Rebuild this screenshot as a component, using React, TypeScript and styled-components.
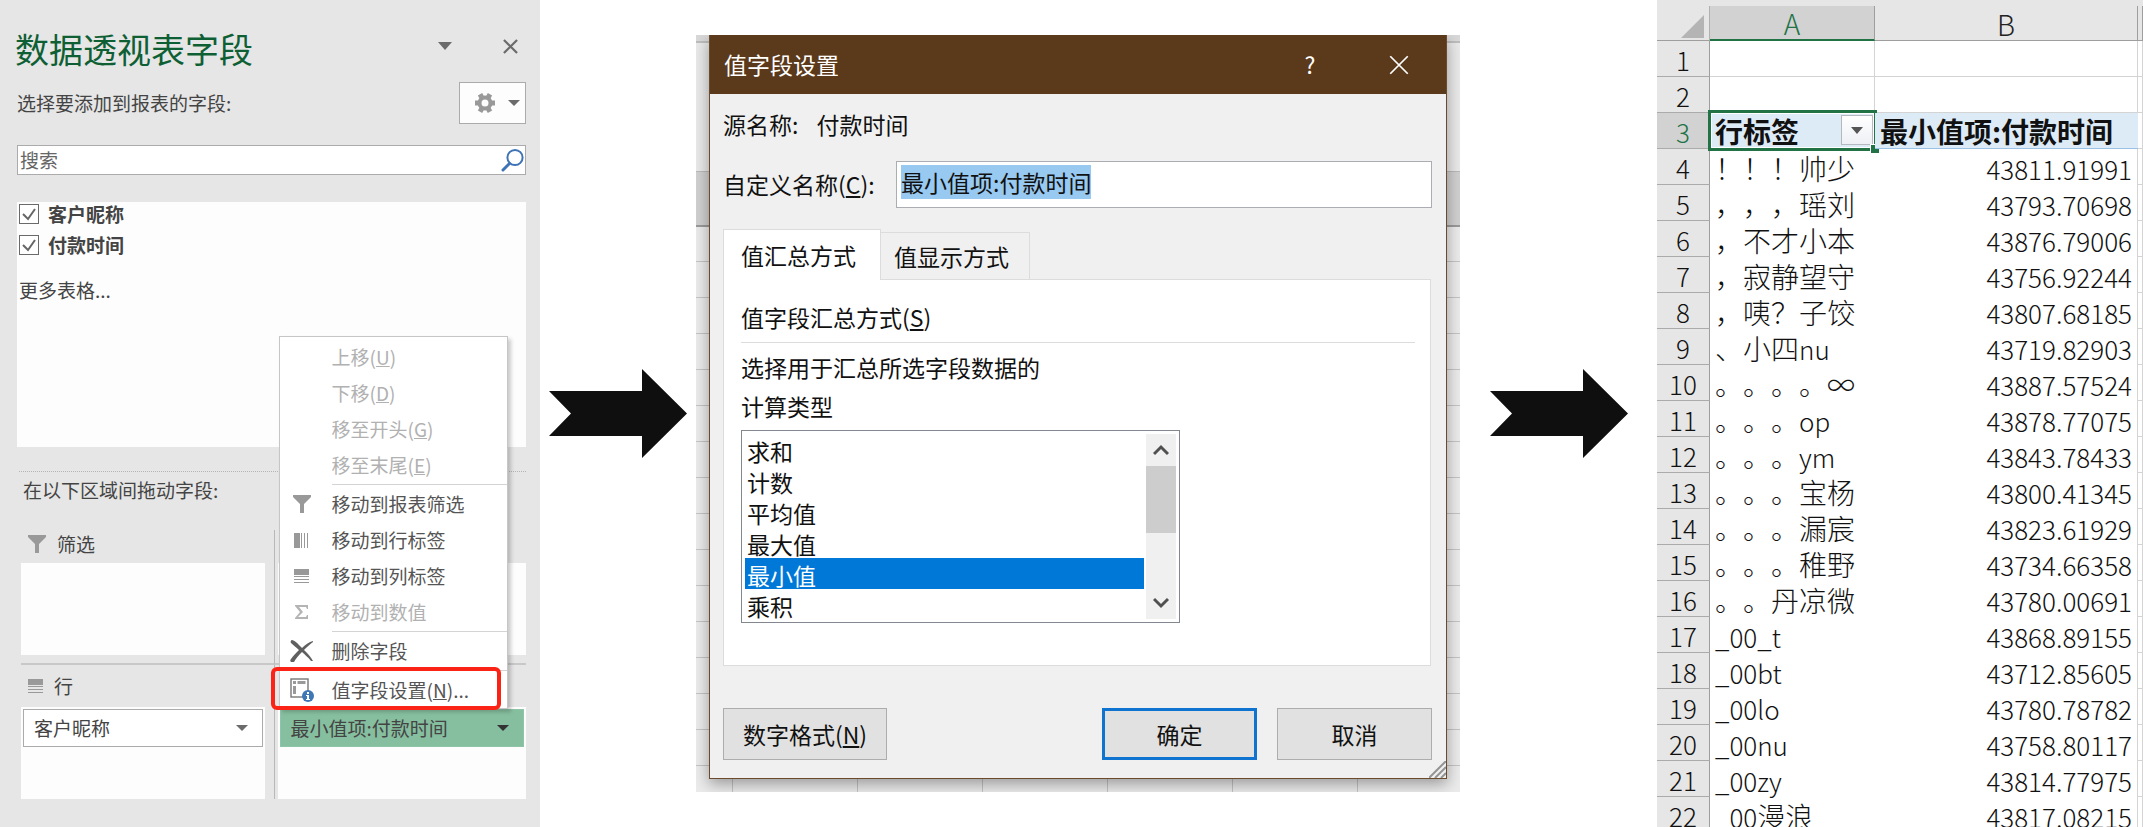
import { useEffect, useRef } from 'react';
import type { ReactNode } from 'react';
import styled, { createGlobalStyle, css } from 'styled-components';

const GlobalStyle = createGlobalStyle`
  *, *::before, *::after { box-sizing: border-box; }
  body {
    margin: 0;
    background: #fff;
    font-family: "Noto Sans CJK SC", "Noto Sans", sans-serif;
    text-spacing-trim: space-all;
  }
  button, input, select { font: inherit; color: inherit; margin: 0; }
  button { padding: 0; border: 0; background: none; cursor: default; }
  svg { display: block; }
`;

const Page = styled.main`
  display: grid;
  grid-template-columns: 540fr 156fr 764fr 197fr 486fr;
  height: 100vh;
  overflow: hidden;
`;

/* ---------- Field pane ---------- */

const Pane = styled.section`
  min-width: 0;
  padding: 27px 14px 28px 17px;
  background: #e6e6e6;
  color: #444;
  font-size: 19px;
  line-height: 24px;
`;

const PaneHeader = styled.header`
  display: flex;
  align-items: flex-start;
  gap: 33px;
  margin-left: -2px;
`;

const PaneTitle = styled.h1`
  flex: 1;
  margin: 0;
  color: #0f5f35;
  font-size: 34px;
  font-weight: 400;
  line-height: 44px;
`;

const IconButton = styled.button`
  display: grid;
  place-items: center;
  width: 32px;
  height: 38px;
`;

const ChooseRow = styled.div`
  display: flex;
  align-items: center;
  justify-content: space-between;
  margin-top: 11px;
`;

const GearButton = styled.button`
  display: flex;
  align-items: center;
  justify-content: flex-end;
  gap: 13px;
  width: 67px;
  height: 42px;
  padding-right: 5px;
  border: 1px solid #ababab;
  background: #fdfdfd;
`;

const SearchBox = styled.label`
  display: flex;
  align-items: center;
  height: 30px;
  margin-top: 21px;
  padding: 0 1px 0 2px;
  border: 1px solid #ababab;
  background: #fff;
`;

const SearchInput = styled.input`
  flex: 1;
  min-width: 0;
  height: 26px;
  padding: 0 0 2px;
  border: 0;
  outline: 0;
  background: none;
  &::placeholder { color: #666; opacity: 1; }
`;

const FieldList = styled.div`
  display: flex;
  flex-direction: column;
  align-items: flex-start;
  gap: 7px;
  height: 245px;
  margin-top: 27px;
  padding: 0 2px;
  background: #fdfdfd;
`;

const FieldLabel = styled.label`
  display: flex;
  align-items: center;
  gap: 9px;
  font-weight: 700;
`;

const CheckHolder = styled.span`
  display: grid;
  svg { grid-area: 1 / 1; pointer-events: none; }
`;

const Checkbox = styled.input`
  grid-area: 1 / 1;
  appearance: none;
  width: 20px;
  height: 20px;
  border: 1px solid #6a6a6a;
  background: #fff;
`;

const MoreLink = styled.a`
  margin-top: 14px;
  color: inherit;
  text-decoration: none;
`;

const DragHint = styled.p`
  margin: 24px 0 0 2px;
  padding: 6px 0 28px 4px;
  border-top: 1px dotted #b4b4b4;
`;

const ZoneGrid = styled.div`
  display: grid;
  grid-template-columns: 253fr 251fr;
  margin-left: 4px;
`;

const Zone = styled.div<{ $side: 'left' | 'right'; $last?: boolean }>`
  display: flex;
  flex-direction: column;
  min-width: 0;
  ${(p) =>
    p.$side === 'left'
      ? css`padding-right: 9px; border-right: 1px solid #b8b8b8;`
      : css`padding-left: 3px;`}
  ${(p) => !p.$last && css`padding-bottom: 8px; border-bottom: 2px solid #c8c8c8;`}
`;

const ZoneLabel = styled.div<{ $tall?: boolean }>`
  display: flex;
  align-items: center;
  gap: 11px;
  height: ${(p) => (p.$tall ? 42 : 33)}px;
  padding: ${(p) => (p.$tall ? '0 0 0 7px' : '0 0 6px 7px')};
`;

const ZoneBox = styled.div`
  height: 92px;
  padding: 2px;
  background: #fdfdfd;
`;

const ChipHolder = styled.div`
  position: relative;
`;

const Chip = styled.button<{ $active?: boolean }>`
  display: flex;
  align-items: center;
  justify-content: space-between;
  width: 100%;
  height: 38px;
  padding: 0 14px 0 10px;
  border: 1px solid ${(p) => (p.$active ? '#8fc5a7' : '#ababab')};
  background: ${(p) => (p.$active ? '#86bf9f' : '#fff')};
`;

const Menu = styled.div`
  position: absolute;
  z-index: 1;
  bottom: 100%;
  left: -1px;
  width: 229px;
  padding-top: 2px;
  border: 1px solid #c6c6c6;
  background: #fff;
  box-shadow: 3px 3px 4px rgba(0, 0, 0, 0.2);
`;

const MenuItem = styled.button`
  position: relative;
  display: grid;
  grid-template-columns: 24px 1fr;
  align-items: center;
  gap: 18px;
  width: 100%;
  height: 36px;
  padding-left: 10px;
  text-align: left;
  white-space: nowrap;
  color: #555;
  &:disabled { color: #b1b1b1; }
`;

const MenuIcon = styled.span`
  display: grid;
  place-items: center;
`;

const MenuRule = styled.hr`
  height: 1px;
  margin: 1px 0 1px 52px;
  border: 0;
  background: #d4d4d4;
`;

const Highlight = styled.span`
  position: absolute;
  top: -5px;
  right: 6px;
  bottom: -2px;
  left: -9px;
  border: 4px solid #fb2315;
  border-radius: 6px;
`;

/* ---------- Step arrow ---------- */

const ArrowCell = styled.div`
  display: grid;
  place-items: center;
`;

/* ---------- Dialog ---------- */

const Backdrop = styled.section`
  align-self: center;
  min-width: 0;
  padding: 0 13px 13px;
  overflow: hidden;
  background:
    linear-gradient(#d9d9d9 6px, #bdbdbd 6px 8px, #e9e9e9 8px 136px, #b9b9b9 136px 137px, #d0d0d0 137px 190px, #9a9a9a 190px 192px, transparent 192px),
    repeating-linear-gradient(90deg, transparent 0 36px, #c4c4c4 36px 37px, transparent 37px 125px) 0 100% / 100% 13px no-repeat,
    repeating-linear-gradient(transparent 0 35px, #c4c4c4 35px 36px) 0 191px no-repeat,
    #ebebeb;
`;

const Dialog = styled.div`
  position: relative;
  border: 1px solid #6b4a2e;
  border-top: 0;
  background: #f0f0f0;
  box-shadow: 0 5px 14px rgba(0, 0, 0, 0.35);
  color: #111;
  font-size: 23px;
  line-height: 31px;
`;

const TitleBar = styled.header`
  display: flex;
  align-items: center;
  height: 59px;
  padding: 0 19px 0 14px;
  background: #5b391b;
  color: #fff;
`;

const DialogTitle = styled.h2`
  flex: 1;
  margin: 0;
  font-size: 23px;
  font-weight: 400;
`;

const TitleButton = styled.button`
  display: grid;
  place-items: center;
  width: 56px;
  height: 40px;
  & + & { margin-left: 33px; }
`;

const DialogBody = styled.div`
  padding: 15px 14px 18px 13px;
`;

const SourceRow = styled.div`
  display: flex;
  gap: 18px;
`;

const NameRow = styled.div`
  display: grid;
  grid-template-columns: 173px 1fr;
  align-items: center;
  margin-top: 21px;
`;

const NameInput = styled.input`
  width: 100%;
  height: 47px;
  padding: 4px 4px 10px;
  border: 1px solid #abadb3;
  outline: 0;
  border-radius: 0;
  background: #fff;
  line-height: 31px;
  &::selection {
    background: rgba(151, 200, 240, 0.99);
    color: #111;
  }
`;

const TabRow = styled.div`
  display: flex;
  align-items: flex-end;
  height: 50px;
  margin-top: 21px;
`;

const Tab = styled.button<{ $active?: boolean }>`
  position: relative;
  margin-bottom: -1px;
  border: 1px solid #dcdcdc;
  text-align: left;
  ${(p) =>
    p.$active
      ? css`
          width: 158px;
          height: 51px;
          padding: 0 0 0 17px;
          border-bottom: 0;
          background: #fff;
        `
      : css`
          width: 150px;
          height: 48px;
          margin-left: -1px;
          padding: 1px 0 0 13px;
          background: #f0f0f0;
        `}
`;

const TabPanel = styled.div`
  height: 387px;
  margin-right: 1px;
  padding: 22px 15px 0 17px;
  border: 1px solid #dcdcdc;
  background: #fff;
`;

const SectionTitle = styled.h3`
  margin: 0;
  padding-bottom: 9px;
  border-bottom: 1px solid #dcdcdc;
  font-size: 23px;
  font-weight: 400;
`;

const Hint = styled.p`
  margin: 9px 0 8px;
`;

const ListLabel = styled.label`
  display: block;
  margin-bottom: 8px;
`;

const ListBox = styled.div`
  display: flex;
  width: 439px;
  height: 193px;
  padding: 3px;
  border: 1px solid #828790;
`;

const List = styled.select`
  flex: 1;
  height: 186px;
  padding: 0;
  border: 0;
  outline: 0;
  border-radius: 0;
  background: #fff;
  overflow: hidden;
  scrollbar-width: none;
  option {
    height: 31px;
    min-height: 31px;
    padding: 0 2px;
    line-height: 27px;
  }
  option:checked {
    background: linear-gradient(#0078d7, #0078d7);
    color: #fff;
    -webkit-text-fill-color: #fff;
  }
`;

const ScrollTrack = styled.div`
  display: flex;
  flex-direction: column;
  width: 30px;
  margin-left: 2px;
  background: #f0f0f0;
`;

const ScrollButton = styled.button`
  display: grid;
  place-items: center;
  height: 32px;
`;

const ScrollThumb = styled.div`
  height: 67px;
  margin-bottom: auto;
  background: #cdcdcd;
`;

const ButtonRow = styled.footer`
  display: flex;
  gap: 20px;
  margin-top: 42px;
`;

const DialogButton = styled.button<{ $primary?: boolean; $leading?: boolean }>`
  width: ${(p) => (p.$leading ? 164 : 155)}px;
  height: 52px;
  margin-right: ${(p) => (p.$leading ? 'auto' : '0')};
  border: ${(p) => (p.$primary ? '3px solid #0f73d0' : '1px solid #adadad')};
  background: #e1e1e1;
`;

const Grip = styled.svg`
  position: absolute;
  right: 0;
  bottom: 0;
`;

/* ---------- Worksheet ---------- */

const Sheet = styled.section`
  min-width: 0;
  padding-top: 6px;
  overflow: hidden;
  background: #e6e6e6;
`;

const Grid = styled.table`
  width: 100%;
  table-layout: fixed;
  border-collapse: separate;
  border-spacing: 0;
  background: #fff;
  color: #111;
  font-size: 26px;
  font-weight: 300;
  line-height: 33px;
  th, td { padding: 2px 0 0; white-space: nowrap; }
`;

const Corner = styled.td`
  height: 35px;
  padding: 7px 5px 0 0 !important;
  border-right: 1px solid #b0b0b0;
  border-bottom: 1px solid #9e9e9e;
  background: #e6e6e6;
  svg { margin-left: auto; }
`;

const ColumnHead = styled.th<{ $active?: boolean }>`
  height: 35px;
  border-right: 1px solid #9e9e9e;
  border-bottom: ${(p) => (p.$active ? '2px solid #217346' : '1px solid #9e9e9e')};
  background: ${(p) => (p.$active ? '#d2d2d2' : '#e6e6e6')};
  color: ${(p) => (p.$active ? '#217346' : '#222')};
  font-weight: 300;
  font-size: 28px;
  line-height: 31px;
`;

const RowHead = styled.th<{ $active?: boolean }>`
  height: 36px;
  border-right: 1px solid #9e9e9e;
  border-bottom: 1px solid #ababab;
  background: ${(p) => (p.$active ? '#d2d2d2' : '#e6e6e6')};
  color: ${(p) => (p.$active ? '#217346' : '#111')};
  font-weight: 300;
`;

const EmptyCell = styled.td`
  border-right: 1px solid #d4d4d4;
  border-bottom: 1px solid #d4d4d4;
`;

const NameCell = styled.td`
  padding-left: 5px !important;
  font-size: 28px;
`;

const Latin = styled.span`
  font-size: 26px;
`;

const ValueCell = styled.td`
  padding-right: 5px !important;
  border-right: 1px solid #d4d4d4;
  text-align: right;
`;

const PivotHead = styled.td`
  position: relative;
  padding-left: 5px !important;
  border-bottom: 1px solid #9bc2e6;
  background: #ddebf7;
  font-size: 28px;
  font-weight: 700;
`;

const Selection = styled.span`
  position: absolute;
  inset: -3px -2px -3px -2px;
  border: 3px solid #217346;
  box-shadow: inset 0 0 0 1px #fff;
  pointer-events: none;
  &::after {
    content: '';
    position: absolute;
    right: -5px;
    bottom: -5px;
    width: 9px;
    height: 9px;
    border: 1px solid #fff;
    border-right: 0;
    border-bottom: 0;
    background: #217346;
  }
`;

const FilterButton = styled.button`
  position: absolute;
  top: 2px;
  right: 2px;
  display: grid;
  place-items: center;
  width: 32px;
  height: 30px;
  border: 1px solid #b5b8bd;
  background: linear-gradient(#fff, #eef0f5);
`;

/* ---------- Icons ---------- */

const Caret = ({ w = 12, h = 6, color = '#6b6b6b' }: { w?: number; h?: number; color?: string }) => (
  <svg width={w} height={h} viewBox="0 0 12 6" preserveAspectRatio="none" aria-hidden="true">
    <path d="M0 0h12L6 6z" fill={color} />
  </svg>
);

const Funnel = () => (
  <svg width="18" height="18" viewBox="0 0 18 18" aria-hidden="true">
    <path d="M0 0h18v2l-7 7v9H7V9L0 2z" fill="#999" />
  </svg>
);

const Stripes = ({ vertical }: { vertical?: boolean }) => (
  <svg width="15" height="15" viewBox="0 0 15 15" aria-hidden="true">
    <g fill="#999" transform={vertical ? 'matrix(0 1 1 0 0 0)' : undefined}>
      <rect x="0" y="0" width="15" height="6" />
      <rect x="0" y="7" width="15" height="1" />
      <rect x="0" y="10" width="15" height="1" />
      <rect x="0" y="13" width="15" height="1" />
    </g>
  </svg>
);

const Sigma = () => (
  <svg width="15" height="16" viewBox="0 0 15 16" aria-hidden="true">
    <path d="M1 1h13v4h-1l-1-2H5l4 5-5 5h8l1-2h1v4H1v-1l5-6-5-6z" fill="#b4b4b4" />
  </svg>
);

const DeleteMark = () => (
  <svg width="24" height="22" viewBox="0 0 24 22" aria-hidden="true">
    <path d="M2 0c4 1 7 5 10 8 3-3 7-6 11-7v1c-3 2-6 5-9 8 4 4 7 7 9 11h-2c-3-4-6-6-9-9-3 3-6 6-8 10H1c-1-1-1-2 0-3 2-3 5-6 8-9C6 7 3 5 1 3 0 2 1 0 2 0z" fill="#606060" />
  </svg>
);

const FieldSettings = () => (
  <svg width="24" height="24" viewBox="0 0 24 24" aria-hidden="true">
    <rect x="1" y="1" width="17" height="18" fill="#fff" stroke="#777" strokeWidth="1.4" />
    <path d="M3 3h3v3H3zM7.500 3h8v3h-8zM3 8h3v8H3z" fill="#999" />
    <circle cx="18" cy="18" r="6" fill="#3f76b5" />
    <path d="M17 14h2v2h-2zM16 17h3v4h1v1h-4v-1h1v-3h-1z" fill="#fff" />
  </svg>
);

const Gear = () => (
  <svg width="20" height="20" viewBox="-10 -10 20 20" aria-hidden="true">
    <circle r="5.500" fill="none" stroke="#999" strokeWidth="4" />
    <g fill="#999">
      {[0, 60, 120, 180, 240, 300].map((a) => (
        <rect key={a} x="-2.500" y="-10" width="5" height="4" transform={`rotate(${a + 30})`} />
      ))}
    </g>
  </svg>
);

const Magnifier = () => (
  <svg width="23" height="24" viewBox="0 0 23 24" aria-hidden="true">
    <circle cx="14" cy="9.500" r="7.600" fill="none" stroke="#3e74b6" strokeWidth="2" />
    <path d="M8.500 15.500L2 22" stroke="#3e74b6" strokeWidth="3" strokeLinecap="round" />
  </svg>
);

const Tick = () => (
  <svg width="20" height="20" viewBox="0 0 20 20" aria-hidden="true">
    <path d="M4 10l5 5 7-10" fill="none" stroke="#666" strokeWidth="2" />
  </svg>
);

const Cross = ({ size, color, weight }: { size: number; color: string; weight: number }) => (
  <svg width={size} height={size} viewBox="0 0 16 16" aria-hidden="true">
    <path d="M1 1l14 14M15 1L1 15" stroke={color} strokeWidth={weight} />
  </svg>
);

const Chevron = ({ down }: { down?: boolean }) => (
  <svg width="16" height="12" viewBox="0 0 16 12" aria-hidden="true">
    <path d={down ? 'M1 2l7 7 7-7' : 'M1 10l7-7 7 7'} fill="none" stroke="#505050" strokeWidth="3" />
  </svg>
);

const StepArrow = () => (
  <ArrowCell>
    <svg width="138" height="89" viewBox="0 0 138 89" aria-hidden="true">
      <path d="M0 22h93V0l45 44.500L93 89V67H0l22-22.500z" fill="#0f0f0f" />
    </svg>
  </ArrowCell>
);

/* ---------- Content ---------- */

type MenuEntry = { text: string; accessKey?: string; tail?: string; icon?: ReactNode; disabled?: boolean; marked?: boolean };

const menuGroups: MenuEntry[][] = [
  [
    { text: '上移', accessKey: 'U', disabled: true },
    { text: '下移', accessKey: 'D', disabled: true },
    { text: '移至开头', accessKey: 'G', disabled: true },
    { text: '移至末尾', accessKey: 'E', disabled: true },
  ],
  [
    { text: '移动到报表筛选', icon: <Funnel /> },
    { text: '移动到行标签', icon: <Stripes vertical /> },
    { text: '移动到列标签', icon: <Stripes /> },
    { text: '移动到数值', icon: <Sigma />, disabled: true },
  ],
  [{ text: '删除字段', icon: <DeleteMark /> }],
  [{ text: '值字段设置', accessKey: 'N', tail: '...', icon: <FieldSettings />, marked: true }],
];

const functions = ['求和', '计数', '平均值', '最大值', '最小值', '乘积'];

const records: [string, string, string][] = [
  ['！！！帅少', '', '43811.91991'],
  ['，，，瑶刘', '', '43793.70698'],
  ['，不才小本', '', '43876.79006'],
  ['，寂静望守', '', '43756.92244'],
  ['，咦？子饺', '', '43807.68185'],
  ['、小四', 'nu', '43719.82903'],
  ['。。。。∞', '', '43887.57524'],
  ['。。。', 'op', '43878.77075'],
  ['。。。', 'ym', '43843.78433'],
  ['。。。宝杨', '', '43800.41345'],
  ['。。。漏宸', '', '43823.61929'],
  ['。。。稚野', '', '43734.66358'],
  ['。。丹凉微', '', '43780.00691'],
  ['', '_00_t', '43868.89155'],
  ['', '_00bt', '43712.85605'],
  ['', '_00lo', '43780.78782'],
  ['', '_00nu', '43758.80117'],
  ['', '_00zy', '43814.77975'],
];

function FieldPane() {
  return (
    <Pane>
      <PaneHeader>
        <PaneTitle>数据透视表字段</PaneTitle>
        <IconButton aria-label="任务窗格选项"><Caret w={14} h={8} /></IconButton>
        <IconButton aria-label="关闭"><Cross size={15} color="#6b6b6b" weight={2.4} /></IconButton>
      </PaneHeader>
      <ChooseRow>
        选择要添加到报表的字段:
        <GearButton aria-label="工具"><Gear /><Caret /></GearButton>
      </ChooseRow>
      <SearchBox>
        <SearchInput type="text" placeholder="搜索" aria-label="搜索" />
        <Magnifier />
      </SearchBox>
      <FieldList>
        {['客户昵称', '付款时间'].map((name) => (
          <FieldLabel key={name}>
            <CheckHolder><Checkbox type="checkbox" defaultChecked /><Tick /></CheckHolder>
            {name}
          </FieldLabel>
        ))}
        <MoreLink href="#tables">更多表格...</MoreLink>
      </FieldList>
      <DragHint>在以下区域间拖动字段:</DragHint>
      <ZoneGrid>
        <Zone $side="left">
          <ZoneLabel><Funnel />筛选</ZoneLabel>
          <ZoneBox />
        </Zone>
        <Zone $side="right">
          <ZoneLabel />
          <ZoneBox />
        </Zone>
        <Zone $side="left" $last>
          <ZoneLabel $tall><Stripes />行</ZoneLabel>
          <ZoneBox><Chip>客户昵称<Caret /></Chip></ZoneBox>
        </Zone>
        <Zone $side="right" $last>
          <ZoneLabel $tall />
          <ZoneBox>
            <ChipHolder>
              <Menu role="menu">
                {menuGroups.map((group, i) => (
                  <div key={i}>
                    {i > 0 && <MenuRule />}
                    {group.map((item) => (
                      <MenuItem key={item.text} role="menuitem" disabled={item.disabled}>
                        <MenuIcon>{item.icon}</MenuIcon>
                        <span>
                          {item.text}
                          {item.accessKey && <>(<u>{item.accessKey}</u>)</>}
                          {item.tail}
                        </span>
                        {item.marked && <Highlight />}
                      </MenuItem>
                    ))}
                  </div>
                ))}
              </Menu>
              <Chip $active>最小值项:付款时间<Caret color="#333" /></Chip>
            </ChipHolder>
          </ZoneBox>
        </Zone>
      </ZoneGrid>
    </Pane>
  );
}

function SettingsDialog() {
  const nameRef = useRef<HTMLInputElement>(null);
  useEffect(() => {
    nameRef.current?.focus();
    nameRef.current?.select();
  }, []);
  return (
    <Backdrop>
      <Dialog role="dialog" aria-labelledby="dialog-title">
        <TitleBar>
          <DialogTitle id="dialog-title">值字段设置</DialogTitle>
          <TitleButton>?</TitleButton>
          <TitleButton aria-label="关闭"><Cross size={20} color="#fff" weight={1.4} /></TitleButton>
        </TitleBar>
        <DialogBody>
          <SourceRow><span>源名称:</span><span>付款时间</span></SourceRow>
          <NameRow>
            <label htmlFor="custom-name">自定义名称(<u>C</u>):</label>
            <NameInput id="custom-name" type="text" ref={nameRef} defaultValue="最小值项:付款时间" />
          </NameRow>
          <TabRow role="tablist">
            <Tab role="tab" aria-selected="true" $active>值汇总方式</Tab>
            <Tab role="tab" aria-selected="false">值显示方式</Tab>
          </TabRow>
          <TabPanel role="tabpanel">
            <SectionTitle>值字段汇总方式(<u>S</u>)</SectionTitle>
            <Hint>选择用于汇总所选字段数据的</Hint>
            <ListLabel htmlFor="function-list">计算类型</ListLabel>
            <ListBox>
              <List id="function-list" size={6} defaultValue="最小值">
                {functions.map((name) => <option key={name}>{name}</option>)}
              </List>
              <ScrollTrack>
                <ScrollButton aria-label="向上滚动"><Chevron /></ScrollButton>
                <ScrollThumb />
                <ScrollButton aria-label="向下滚动"><Chevron down /></ScrollButton>
              </ScrollTrack>
            </ListBox>
          </TabPanel>
          <ButtonRow>
            <DialogButton $leading>数字格式(<u>N</u>)</DialogButton>
            <DialogButton $primary>确定</DialogButton>
            <DialogButton>取消</DialogButton>
          </ButtonRow>
        </DialogBody>
        <Grip width="17" height="17" viewBox="0 0 17 17" aria-hidden="true">
          <path d="M0 17L17 0M6 17L17 6M12 17l5-5" stroke="#949494" strokeWidth="2" />
        </Grip>
      </Dialog>
    </Backdrop>
  );
}

function Worksheet() {
  return (
    <Sheet>
      <Grid>
        <colgroup>
          <col width="53" />
          <col width="165" />
          <col />
          <col width="5" />
        </colgroup>
        <thead>
          <tr>
            <Corner>
              <svg width="23" height="23" viewBox="0 0 23 23" aria-hidden="true">
                <path d="M23 0v23H0z" fill="#b4b4b4" />
              </svg>
            </Corner>
            <ColumnHead $active>A</ColumnHead>
            <ColumnHead>B</ColumnHead>
            <ColumnHead />
          </tr>
        </thead>
        <tbody>
          {[1, 2].map((n) => (
            <tr key={n}>
              <RowHead>{n}</RowHead>
              <EmptyCell />
              <EmptyCell />
              <EmptyCell />
            </tr>
          ))}
          <tr>
            <RowHead $active>3</RowHead>
            <PivotHead>
              行标签
              <FilterButton aria-label="筛选"><Caret w={12} h={7} color="#555" /></FilterButton>
              <Selection />
            </PivotHead>
            <PivotHead>最小值项:付款时间</PivotHead>
            <EmptyCell />
          </tr>
          {records.map(([name, latin, value], i) => (
            <tr key={value}>
              <RowHead>{i + 4}</RowHead>
              <NameCell>{name}{latin && <Latin>{latin}</Latin>}</NameCell>
              <ValueCell>{value}</ValueCell>
              <EmptyCell />
            </tr>
          ))}
          <tr>
            <RowHead>22</RowHead>
            <NameCell><Latin>_00</Latin>漫浪</NameCell>
            <ValueCell>43817.08215</ValueCell>
            <EmptyCell />
          </tr>
        </tbody>
      </Grid>
    </Sheet>
  );
}

export default function App() {
  return (
    <>
      <GlobalStyle />
      <Page>
        <FieldPane />
        <StepArrow />
        <SettingsDialog />
        <StepArrow />
        <Worksheet />
      </Page>
    </>
  );
}
